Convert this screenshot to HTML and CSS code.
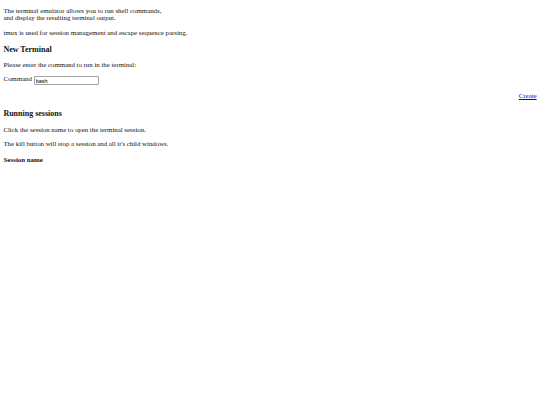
FILE: index.html
```html
<!DOCTYPE html>
<html>
<head>
<meta charset="utf-8">
<title>Terminal</title>
<link rel="stylesheet" href="styles.css">
</head>
<body class="page">
<p class="para intro">The terminal emulator allows you to run shell commands,<br>and display the resulting terminal output.</p>
<p class="para para-tmux">tmux is used for session management and escape sequence parsing.</p>
<h3 class="heading heading-new">New Terminal</h3>
<p class="para para-enter">Please enter the command to run in the terminal:</p>
<form class="form">
<label class="field">Command <input class="input" type="text" value="bash"></label>
<div class="actions"><a class="link" href="#">Create</a></div>
</form>
<h3 class="heading heading-running">Running sessions</h3>
<p class="para para-click">Click the session name to open the terminal session.</p>
<p class="para para-kill">The kill button will stop a session and all it's child windows.</p>
<table class="sessions">
<thead><tr><th class="th">Session name</th></tr></thead>
<tbody></tbody>
</table>
</body>
</html>
```
FILE: styles.css
```css
html { background: #fff; }
.page {
  margin: 7px 3.4px 3.4px;
  font-family: "Liberation Serif", "Times New Roman", serif;
  font-size: 6.83px;
  line-height: 7px;
  color: #111;
}
.para { margin: 0; }
.intro { margin-bottom: 8px; }
.para-tmux { margin-bottom: 8.5px; }
.heading { font-size: 8px; line-height: 9.2px; font-weight: bold; margin: 0; }
.heading-new { margin-bottom: 7.3px; }
.para-enter { margin-bottom: 7px; }
.form { margin: 0; }
.field { display: block; margin: 0 0 7.2px; }
.input {
  box-sizing: border-box;
  font-family: "Liberation Sans", Arial, sans-serif;
  font-size: 5.5px;
  width: 65.5px;
  height: 9px;
  padding: 0 1.2px;
  border: 1px solid #a3a3a3;
  border-radius: 1px;
  margin: 0;
  vertical-align: -1.5px;
  color: #000;
}
.actions { text-align: right; margin: 0 0 9.5px; }
.link { color: #0000ee; text-decoration: underline; }
.heading-running { margin-bottom: 8.3px; }
.para-click { margin-bottom: 7px; }
.para-kill { margin-bottom: 8.5px; }
.sessions { border-spacing: 0.85px; }
.th { font-weight: bold; padding: 0.43px; text-align: left; }
```
